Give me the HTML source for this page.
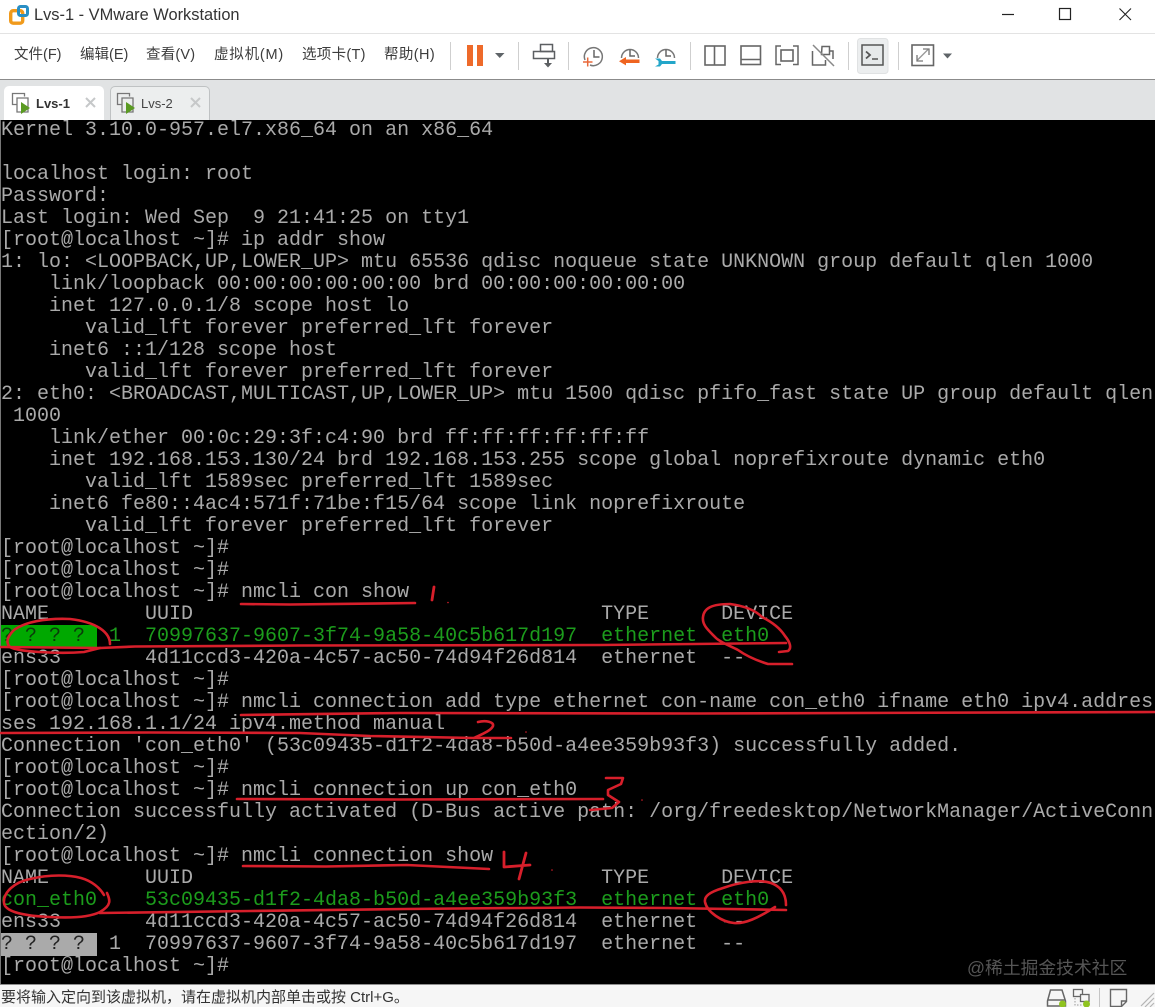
<!DOCTYPE html>
<html><head><meta charset="utf-8"><style>
html,body{margin:0;padding:0;background:#fff}
#w{position:relative;width:1155px;height:1007px;overflow:hidden;background:#fff;font-family:"Liberation Sans","Noto Sans CJK SC",sans-serif;color:#333}
.a{position:absolute;white-space:pre}
.m{font-size:14.5px;top:46px;line-height:18px;color:#3c3c3c}
#t{position:absolute;left:0;top:120px;width:1155px;height:864px;background:#000;overflow:hidden;border-left:1px solid #777;box-sizing:border-box}
#p{position:absolute;left:0;top:0;margin:0;font:20px/22px "Liberation Mono",monospace;color:#aaa;white-space:pre}
.g{color:#1c9c1c}
.hg{background:#00a800;color:#0a3a0a}
.hw{background:#aaa;color:#222}
.tab{position:absolute;top:86px;height:34px;box-sizing:border-box;border-radius:5px 5px 0 0}
</style></head><body><div id="w">
<div class="a" style="left:34px;top:5px;font-size:16.4px;line-height:20px;color:#333">Lvs-1 - VMware Workstation</div>
<div class="a" style="left:0;top:33px;width:1155px;height:1px;background:#e3e3e3"></div>
<div class="a m" style="left:14px">文件(F)</div>
<div class="a m" style="left:80px">编辑(E)</div>
<div class="a m" style="left:146px;letter-spacing:.2px">查看(V)</div>
<div class="a m" style="left:214px;letter-spacing:.8px">虚拟机(M)</div>
<div class="a m" style="left:302px;letter-spacing:.3px">选项卡(T)</div>
<div class="a m" style="left:384px;letter-spacing:.4px">帮助(H)</div>
<div class="a" style="left:0;top:79px;width:1155px;height:1px;background:#8b8b8b"></div>
<div class="a" style="left:0;top:80px;width:1155px;height:40px;background:#e1e3e4"></div>
<div class="tab" style="left:4px;width:100px;background:#fff"></div>
<div class="tab" style="left:110px;width:100px;background:#eceeee;border:1px solid #bfc2c3;border-bottom:0"></div>
<div class="a" style="left:36px;top:95px;font-size:13px;line-height:17px;font-weight:bold;color:#333">Lvs-1</div>
<div class="a" style="left:141px;top:95px;font-size:13px;line-height:17px;color:#444">Lvs-2</div>

<svg class="a" style="left:0;top:0" width="1155" height="120" viewBox="0 0 1155 120" fill="none">
<!-- logo -->
<rect x="10.700" y="10.700" width="12" height="12.500" rx="2.500" stroke="#f09a1c" stroke-width="3.400"/>
<rect x="18.500" y="6.500" width="9" height="9" rx="2" stroke="#2a8fc4" stroke-width="3"/>
<!-- window controls -->
<path d="M1002 14.500h12" stroke="#222" stroke-width="1.200"/>
<rect x="1059.500" y="8.500" width="11" height="11" stroke="#222" stroke-width="1.200"/>
<path d="M1119.500 8.500l11.500 11.500M1131 8.500l-11.500 11.500" stroke="#222" stroke-width="1.100"/>
<!-- separators -->
<path d="M450.500 42v28M518.500 42v28M568.500 42v28M690.500 42v28M848.500 42v28M898.500 42v28" stroke="#cfcfcf"/>
<!-- pause -->
<rect x="467" y="45" width="6" height="21" fill="#ee6a2a"/><rect x="477" y="45" width="6" height="21" fill="#ee6a2a"/>
<path d="M495 53h9.500l-4.750 5z" fill="#5f6468"/>
<!-- send keys -->
<rect x="540.500" y="44.500" width="12" height="7" stroke="#5c5f62" stroke-width="1.500"/>
<rect x="533.500" y="51.500" width="21" height="7" stroke="#5c5f62" stroke-width="1.500"/>
<path d="M548 59v5" stroke="#5c5f62" stroke-width="2"/><path d="M544 63h8l-4 4.500z" fill="#5c5f62"/>
<!-- snapshot 1 -->
<path d="M585 60a9 9 0 1 1 5 5" stroke="#777" stroke-width="1.500"/><path d="M594 50v7h5.500" stroke="#666" stroke-width="1.500"/>
<path d="M583 62h9.500M587.700 57.500v9" stroke="#e8693a" stroke-width="1.500"/>
<!-- snapshot 2 -->
<path d="M621.500 58a8.500 8.500 0 1 1 17 0" stroke="#777" stroke-width="1.500"/><path d="M630 49.500v6.500h5" stroke="#666" stroke-width="1.500"/>
<path d="M624 59.500h15.500v3.500h-15.500z" fill="#ef6420"/><path d="M619 61.200l7-4.200v8.400z" fill="#ef6420"/>
<!-- snapshot 3 -->
<path d="M657.500 58a8.500 8.500 0 1 1 17 0" stroke="#777" stroke-width="1.500"/><path d="M666 49.500v6.500h5" stroke="#666" stroke-width="1.500"/>
<path d="M655 58.500h5l2 2.500h13.500v3h-13.500l-2 2.500h-5l3.500-2v-3.500z" fill="#23a6c9"/>
<!-- layouts -->
<rect x="705" y="46" width="20" height="19" stroke="#666" stroke-width="1.600"/><path d="M714.500 46v19" stroke="#666" stroke-width="1.600"/>
<rect x="741" y="46" width="19.500" height="18.500" stroke="#666" stroke-width="1.600"/><path d="M741 59.500h19.500" stroke="#666" stroke-width="1.600"/>
<path d="M781 46h-5v18.500h5M793 46h5v18.500h-5" stroke="#666" stroke-width="1.500"/><rect x="781" y="50" width="12" height="11" stroke="#666" stroke-width="1.600"/>
<path d="M812.500 51v14h13v-5M829 51h4v8M822 46.500h7.500v8h-8z" stroke="#666" stroke-width="1.500"/><path d="M813 45l21 21" stroke="#888" stroke-width="1.500"/>
<!-- console -->
<rect x="857.500" y="38.500" width="30.500" height="35" rx="3" fill="#eceeef" stroke="#e0e2e3"/>
<rect x="862" y="45" width="21" height="20" fill="#e6e9ea" stroke="#555" stroke-width="1.500"/>
<path d="M866 51.500l4 3.500-4 3.500" stroke="#555" stroke-width="1.800"/><path d="M872 59h6" stroke="#555" stroke-width="1.500"/>
<!-- fullscreen -->
<rect x="912" y="45" width="21.500" height="20.500" stroke="#666" stroke-width="1.600"/>
<path d="M917 60.500l11-11" stroke="#999" stroke-width="1.300"/><path d="M923 49h6v6M917 55v6h6" stroke="#777" stroke-width="1.300"/>
<path d="M943 53.500h9l-4.500 5z" fill="#5f6468"/>
<!-- tab icons -->
<path d="M17.500 104.500h-5v-11h12v3" stroke="#777" stroke-width="1.300"/><path d="M17 98h11v14h-11z" stroke="#777" stroke-width="1.300" fill="#fff"/><path d="M21 102l9 6-9 6z" fill="#5a9a22"/>
<g transform="translate(105 0)"><path d="M17.500 104.500h-5v-11h12v3" stroke="#777" stroke-width="1.300"/><path d="M17 98h11v14h-11z" stroke="#777" stroke-width="1.300" fill="#eceeee"/><path d="M21 102l9 6-9 6z" fill="#5a9a22"/></g>
<path d="M86 98l9 9M95 98l-9 9M191 98l9 9M200 98l-9 9" stroke="#c6c8c9" stroke-width="2"/>
</svg>

<div id="t"><pre id="p">Kernel 3.10.0-957.el7.x86_64 on an x86_64

localhost login: root
Password:
Last login: Wed Sep  9 21:41:25 on tty1
[root@localhost ~]# ip addr show
1: lo: &lt;LOOPBACK,UP,LOWER_UP&gt; mtu 65536 qdisc noqueue state UNKNOWN group default qlen 1000
    link/loopback 00:00:00:00:00:00 brd 00:00:00:00:00:00
    inet 127.0.0.1/8 scope host lo
       valid_lft forever preferred_lft forever
    inet6 ::1/128 scope host
       valid_lft forever preferred_lft forever
2: eth0: &lt;BROADCAST,MULTICAST,UP,LOWER_UP&gt; mtu 1500 qdisc pfifo_fast state UP group default qlen
 1000
    link/ether 00:0c:29:3f:c4:90 brd ff:ff:ff:ff:ff:ff
    inet 192.168.153.130/24 brd 192.168.153.255 scope global noprefixroute dynamic eth0
       valid_lft 1589sec preferred_lft 1589sec
    inet6 fe80::4ac4:571f:71be:f15/64 scope link noprefixroute
       valid_lft forever preferred_lft forever
[root@localhost ~]#
[root@localhost ~]#
[root@localhost ~]# nmcli con show
NAME        UUID                                  TYPE      DEVICE
<span class="hg">? ? ? ?&nbsp;</span><span class="g"> 1  70997637-9607-3f74-9a58-40c5b617d197  ethernet  eth0</span>
ens33       4d11ccd3-420a-4c57-ac50-74d94f26d814  ethernet  --
[root@localhost ~]#
[root@localhost ~]# nmcli connection add type ethernet con-name con_eth0 ifname eth0 ipv4.addres
ses 192.168.1.1/24 ipv4.method manual
Connection 'con_eth0' (53c09435-d1f2-4da8-b50d-a4ee359b93f3) successfully added.
[root@localhost ~]#
[root@localhost ~]# nmcli connection up con_eth0
Connection successfully activated (D-Bus active path: /org/freedesktop/NetworkManager/ActiveConn
ection/2)
[root@localhost ~]# nmcli connection show
NAME        UUID                                  TYPE      DEVICE
<span class="g">con_eth0    53c09435-d1f2-4da8-b50d-a4ee359b93f3  ethernet  eth0</span>
ens33       4d11ccd3-420a-4c57-ac50-74d94f26d814  ethernet  --
<span class="hw">? ? ? ?&nbsp;</span> 1  70997637-9607-3f74-9a58-40c5b617d197  ethernet  --
[root@localhost ~]#</pre></div>

<div class="a" style="left:967px;top:957px;font-size:17.800px;line-height:22px;color:#565656;font-family:'Liberation Sans','Noto Sans CJK SC',sans-serif">@稀土掘金技术社区</div>

<svg class="a" style="left:0;top:0" width="1155" height="1007" viewBox="0 0 1155 1007" fill="none" stroke="#d71f2b" stroke-width="2.600" stroke-linecap="round" stroke-linejoin="round">
<path d="M241 604L290 604.500L415 603"/>
<path d="M434 587L432 600" stroke-width="2.800"/><circle cx="448" cy="602.500" r=".8" fill="#d71f2b" stroke="none"/>
<path d="M1 647L100 648L135 646.500L300 645.500L600 645L786 643"/>
<path d="M110 644C110 632 96 622 70 619C45 618 25 622 14 630C8 636 5 642 10 647C18 652 60 654 84 652L100 648"/>
<path d="M792 664L768 664C755 660 745 655 738 650C728 645 720 642 716 638C708 630 702 625 703 617C704 608 712 604 730 604C745 606 755 610 762 617C772 622 780 628 785 636C790 642 792 648 788 651L779 652"/>
<path d="M241 715L400 713L700 713.500L1155 712"/>
<path d="M1 733L150 732.500L300 733L370 736L474 738L511 738"/>
<path d="M478 722C486 720 494 722 493 726C491 731 480 735 474 738"/>
<circle cx="526" cy="732" r=".8" fill="#d71f2b" stroke="none"/>
<path d="M237 799L400 799.500L603 799"/>
<path d="M606 778L623 778L621 784L608 790L608 795L619 802L612 808L590 810"/>
<circle cx="642" cy="800" r=".8" fill="#d71f2b" stroke="none"/>
<path d="M243 866L326 866.500L407 865L489 869"/>
<path d="M504 852L504 867L530 865M526 853L519 879" stroke-width="2.800"/>
<circle cx="552" cy="870" r=".8" fill="#d71f2b" stroke="none"/>
<path d="M100 913L250 911L404 909L580 907.500L668 908L786 910"/>
<path d="M107 893C110 900 112 905 100 912C88 918 67 918 50 917C25 916 5 912 4 903C3 892 15 882 30 879C50 874 70 875 81 878C92 881 100 888 104 895"/>
<path d="M786 905C786 895 782 887 771 883C760 879 740 882 723 888C710 892 704 896 705 902C707 912 722 922 734 923C745 924 758 918 775 907"/>
</svg>

<div class="a" style="left:0;top:984px;width:1155px;height:1px;background:#8f8f8f"></div>
<div class="a" style="left:0;top:985px;width:1155px;height:22px;background:#f6f6f6"></div>
<div class="a" style="left:1px;top:989px;font-size:15px;line-height:18px;color:#333">要将输入定向到该虚拟机，请在虚拟机内部单击或按 Ctrl+G。</div>
<svg class="a" style="left:1035px;top:985px" width="120" height="22" viewBox="0 0 120 22" fill="none">
<path d="M12.500 21v-5l3-11h11.500l3.500 11v5zM13 15h17" stroke="#666" stroke-width="1.500"/>
<circle cx="27.500" cy="19" r="3.500" fill="#8fc31f"/>
<rect x="38.500" y="4.500" width="9" height="7" stroke="#666" stroke-width="1.300"/>
<rect x="45.500" y="9.500" width="8.500" height="7" fill="#f6f6f6" stroke="#666" stroke-width="1.300"/>
<path d="M40 13v7h8" stroke="#999" stroke-dasharray="1.500 1.500"/>
<circle cx="51.500" cy="19" r="3.500" fill="#8fc31f"/>
<path d="M64.500 3v19" stroke="#c5c5c5"/>
<path d="M75.500 21.500v-17h16v12l-5 5zM86.500 21v-5h5" stroke="#666" stroke-width="1.400"/>
<path d="M119 8l-13 13M119 13l-9 9M119 18l-4 4" stroke="#b5b5b5" stroke-width="1.200"/>
</svg>
</div></body></html>
